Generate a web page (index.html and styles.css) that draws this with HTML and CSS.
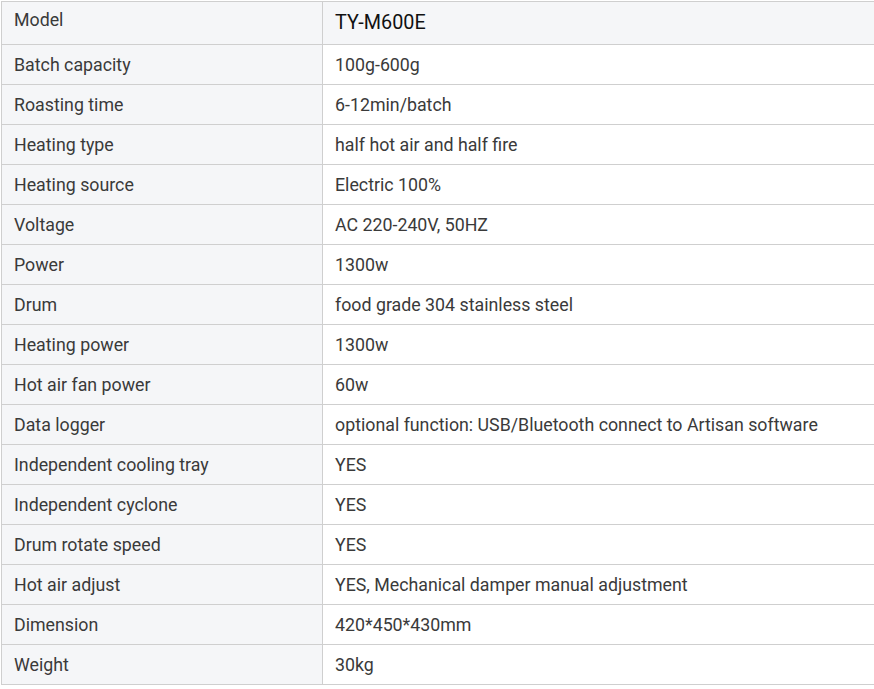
FILE: index.html
```html
<!DOCTYPE html>
<html>
<head>
<meta charset="utf-8">
<link rel="stylesheet" href="styles.css">
</head>
<body>
<table class="spec">
  <tr class="head"><td class="label label-top">Model</td><td class="value model">TY-M600E</td></tr>
  <tr><td class="label">Batch capacity</td><td class="value">100g-600g</td></tr>
  <tr><td class="label">Roasting time</td><td class="value">6-12min/batch</td></tr>
  <tr><td class="label">Heating type</td><td class="value">half hot air and half fire</td></tr>
  <tr><td class="label">Heating source</td><td class="value">Electric 100%</td></tr>
  <tr><td class="label">Voltage</td><td class="value">AC 220-240V, 50HZ</td></tr>
  <tr><td class="label">Power</td><td class="value">1300w</td></tr>
  <tr><td class="label">Drum</td><td class="value">food grade 304 stainless steel</td></tr>
  <tr><td class="label">Heating power</td><td class="value">1300w</td></tr>
  <tr><td class="label">Hot air fan power</td><td class="value">60w</td></tr>
  <tr><td class="label">Data logger</td><td class="value">optional function: USB/Bluetooth connect to Artisan software</td></tr>
  <tr><td class="label">Independent cooling tray</td><td class="value">YES</td></tr>
  <tr><td class="label">Independent cyclone</td><td class="value">YES</td></tr>
  <tr><td class="label">Drum rotate speed</td><td class="value">YES</td></tr>
  <tr><td class="label">Hot air adjust</td><td class="value">YES, Mechanical damper manual adjustment</td></tr>
  <tr><td class="label">Dimension</td><td class="value">420*450*430mm</td></tr>
  <tr><td class="label">Weight</td><td class="value">30kg</td></tr>
</table>
</body>
</html>
```
FILE: styles.css
```css
html, body {
  margin: 0;
  padding: 0;
  background: #ffffff;
}
body {
  padding: 1px 0 0 1px;
  font-family: Roboto, "Liberation Sans", sans-serif;
  font-size: 17.8px;
  color: #3a3a3a;
}
.spec {
  border-collapse: collapse;
  width: 874px;
  table-layout: fixed;
}
.spec td {
  border: 1px solid #cfcfcf;
  height: 38px;
  padding: 0 0 1px 12px;
  vertical-align: middle;
  white-space: nowrap;
}
.spec .label {
  width: 308px;
  background: #f5f6f8;
}
.spec .value {
  background: #ffffff;
  padding-left: 12px;
}
.spec .head td {
  height: 41px;
  background: #f5f6f8;
}
.spec .head .label-top {
  height: 34px;
  padding-bottom: 8px;
}
.spec .model {
  color: #111111;
  font-size: 19.8px;
}
```
